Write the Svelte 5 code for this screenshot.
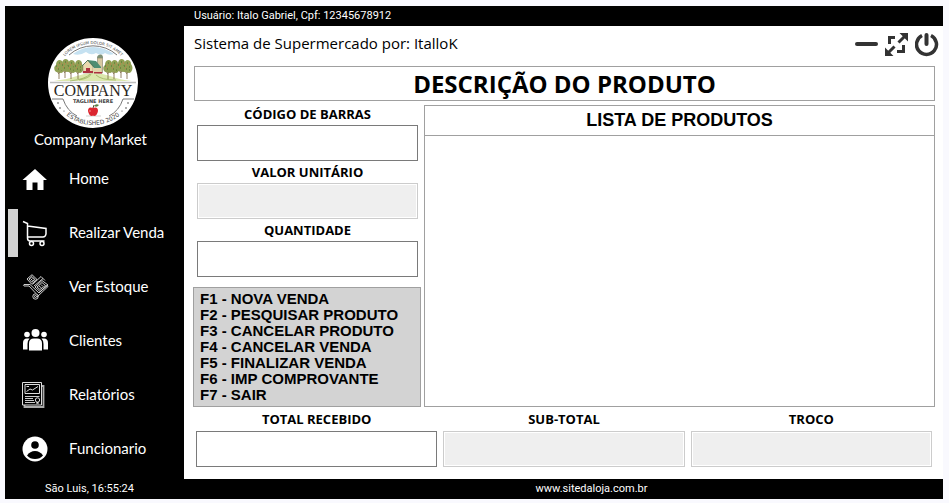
<script>
  const menu = [
    { id: 'home', label: 'Home' },
    { id: 'cart', label: 'Realizar Venda' },
    { id: 'stock', label: 'Ver Estoque' },
    { id: 'people', label: 'Clientes' },
    { id: 'report', label: 'Relatórios' },
    { id: 'user', label: 'Funcionario' }
  ];
  let active = $state('cart');

  const fields = [
    { id: 'codigo', label: 'CÓDIGO DE BARRAS', locked: false },
    { id: 'valor', label: 'VALOR UNITÁRIO', locked: true },
    { id: 'quantidade', label: 'QUANTIDADE', locked: false }
  ];
  const totals = [
    { id: 'recebido', label: 'TOTAL RECEBIDO', locked: false },
    { id: 'subtotal', label: 'SUB-TOTAL', locked: true },
    { id: 'troco', label: 'TROCO', locked: true }
  ];
  const shortcuts = [
    'F1 - NOVA VENDA',
    'F2 - PESQUISAR PRODUTO',
    'F3 - CANCELAR PRODUTO',
    'F4 - CANCELAR VENDA',
    'F5 - FINALIZAR VENDA',
    'F6 - IMP COMPROVANTE',
    'F7 - SAIR'
  ];
  const trees = [[11, 28], [17, 27], [23, 28], [30, 28], [60, 28], [66, 28], [73, 27], [79, 28]];
</script>

{#snippet field(f)}
  <div class="field">
    <label for={f.id}>{f.label}</label>
    <input id={f.id} type="text" disabled={f.locked} />
  </div>
{/snippet}

<div class="window">
  <aside>
    <svg class="logo" viewBox="0 0 90 90" aria-hidden="true">
      <defs>
        <path id="arcTop" d="M6 45A39 39 0 0 1 84 45" />
        <path id="arcBottom" d="M3 45A42 42 0 0 0 87 45" />
      </defs>
      <circle cx="45" cy="45" r="45" fill="#fff" />
      <text class="tiny" font-size="4" text-anchor="middle"><textPath href="#arcTop" startOffset="50%">LOREM IPSUM DOLOR SIT AMET</textPath></text>
      <path d="M21 17A36 36 0 0 1 69 17" fill="none" stroke="#555" stroke-width=".8" />
      <path d="M25 16Q34 9 45 9T66 16Q61 18 57 15Q53 18 48 15Q43 18 38 14Q32 18 25 16Z" fill="#c5e1f1" />
      <path d="M6 43Q18 42 29 38Q45 32 62 38Q72 42 84 43Z" fill="#dce8ad" />
      <path d="M22 43Q38 41 42 36M48 37Q53 42 68 42M31 42Q42 40 43 36" fill="none" stroke="#92aa55" stroke-width=".7" />
      {#each trees as [x, y]}
        <path d="M{x} {y}v13M{x} {y + 8}l-2-3M{x} {y + 7}l2-3" stroke="#76633d" stroke-width=".8" fill="none" />
        <path d="M{x - 4} {y + 5}q-2-4 1-6q0-4 3-5q4 0 4 4q3 4 0 8q-2 2-4 0q-2 1-4-1Z" fill="#8fa053" />
        <path d="M{x - 3} {y}h1m2-3h1m1 4h1m-4 2h1m2 1h1" stroke="#4d6a32" stroke-width="1" />
        <path d="M{x - 1} {y - 1}h1m2-1h1m-5 4h1" stroke="#cc7650" stroke-width="1" />
      {/each}
      <path d="M49.500 20h5v15h-5Z" fill="#d6c8a0" stroke="#6e6650" stroke-width=".5" />
      <path d="M49 20q0-3 3-3.500t3 3.500Z" fill="#7f9076" />
      <path d="M35 35v-8l5-5 5 5v8Z" fill="#ead9af" stroke="#6e6650" stroke-width=".4" />
      <path d="M39 22l9 1 5 6v1h-7Z" fill="#4f8d72" />
      <path d="M34 28l6-6 6 7" fill="none" stroke="#55795c" />
      <path d="M45 30h8v5h-8Z" fill="#e2d4aa" />
      <path d="M38 30h4v5h-4ZM35 33h10v2h-10ZM46 34h8v1.500h-8Z" fill="#ae3440" />
      <path d="M2 44.500H88" stroke="#bdbdbd" stroke-width="1.500" />
      <text x="45" y="58" class="serif" font-size="16" text-anchor="middle">COMPANY</text>
      <path d="M4 61H15M75 61H86M15 61Q19 73 29 78M75 61Q71 73 61 78" fill="none" stroke="#555" stroke-width=".8" />
      <text x="45" y="65" class="tag" font-size="5" text-anchor="middle">TAGLINE HERE</text>
      <g fill="#444"><circle cx="10" cy="65" r=".8" /><circle cx="12" cy="70" r=".8" /><circle cx="16" cy="73" r=".6" /><circle cx="80" cy="65" r=".8" /><circle cx="78" cy="70" r=".8" /><circle cx="74" cy="73" r=".6" /></g>
      <path d="M38 78H53" stroke="#bbb" stroke-width=".7" />
      <path d="M45 70q-5-2-5 3q1 5 4 5q1-1 2 0q3 0 4-5q0-5-5-3Z" fill="#db2630" />
      <path d="M45 70l1-3" stroke="#55402a" /><path d="M46 68q2-3 5-1q-2 3-5 1Z" fill="#568146" />
      <path d="M42 72v2" stroke="#ff8d88" />
      <text class="tiny" font-size="6" text-anchor="middle"><textPath href="#arcBottom" startOffset="50%">ESTABLISHED 2020</textPath></text>
    </svg>
    <div class="company">Company Market</div>

    <nav>
      {#each menu as m}
        <button class="item" class:active={active === m.id} onclick={() => (active = m.id)}>
          <svg class="icon" viewBox="0 0 26 26" aria-hidden="true">
            {#if m.id === 'home'}
              <path d="M12 3L24 14H20.500V24H14.500V16.500H9.500V24H3.500V14H-.5Z" fill="#fff" />
            {:else if m.id === 'cart'}
              <path d="M0 1.500L4.500 3.500V18Q4.500 21 7 21H21.500M4.500 6L23 8.500V14Q22.500 17 20 17H5" fill="none" stroke="#fff" stroke-width="1.500" />
              <g fill="#000" stroke="#fff" stroke-width="1.500"><circle cx="8.500" cy="23.500" r="2" /><circle cx="19" cy="23.500" r="2" /></g>
            {:else if m.id === 'stock'}
              <g fill="none" stroke="#e4e4e4" stroke-width=".9">
                <path d="M1 10.500H7L16 19L24 11.500L25 12.500L14 23M1 12H6L13 19.500M1 10.500Q0 11.200 1 12" />
                <circle cx="12.500" cy="22.500" r="2.700" /><circle cx="12.500" cy="22.500" r="1" />
                <path d="M4 5L9 .7L14 5.500L8.500 10ZM6 5L9 2.500L12 5.500L8.500 8ZM7.500 4.500l2 2M9 3.500l2 2" />
                <path d="M9.500 10.500L18 2.500L22 6.500M11 12L20 4.500" />
                <path d="M12 13L19 6.500L25 11L17 17.500ZM14 13L19 8.500L22.500 11.500L17 15.500ZM16 12l2.500 2M18 10.500l2 2" />
              </g>
            {:else if m.id === 'people'}
              <g fill="#fff">
                <circle cx="12.500" cy="5" r="4" /><circle cx="4" cy="6.500" r="2.800" /><circle cx="21" cy="6.500" r="2.800" />
                <path d="M6 22.500V15.500Q6 10.500 11 10.500H14Q19 10.500 19 15.500V22.500Z" />
                <path d="M0 21.500V15Q0 10.500 4 10.500H6.500Q4.500 12.500 4.500 16V21.500ZM25 21.500V15Q25 10.500 21 10.500H18.500Q20.500 12.500 20.500 16V21.500Z" />
              </g>
            {:else if m.id === 'report'}
              <path d="M1.500 23V25H20.500V4H18.500" fill="none" stroke="#aaa" stroke-width="1.800" />
              <path d="M-.5 .5H18.500V23H-.5Z" fill="#000" stroke="#ddd" />
              <path d="M2 11.500H16.500V2.500H2ZM3.500 9.500L7 7L9.500 8L15 4.500M3.500 4.500H6" fill="none" stroke="#ddd" />
              <path d="M2 14.500H16.500M2 16.500H10M2 18.500H11M2 20.500H12" stroke="#ccc" />
              <circle cx="14.500" cy="18" r="2.200" fill="#000" stroke="#ddd" /><path d="M13.500 20v2.500l1-1 1 1V20" fill="#ddd" />
            {:else}
              <circle cx="12" cy="13" r="12.500" fill="#fff" />
              <circle cx="12" cy="9" r="3.800" fill="#000" />
              <path d="M4 19.500Q7 15 12 15T20 19.500Q17 23 12 23T4 19.500Z" fill="#000" />
            {/if}
          </svg>
          <span>{m.label}</span>
        </button>
      {/each}
    </nav>
    <div class="clock">São Luis, 16:55:24</div>
  </aside>

  <div class="content">
    <div class="userbar">Usuário: Italo Gabriel, Cpf: 12345678912</div>
    <main>
      <header>
        <span class="title">Sistema de Supermercado por: ItalloK</span>
        <div class="controls">
          <button aria-label="Minimizar"><svg viewBox="0 0 24 24"><path d="M2 11H21" stroke="#333" stroke-width="4" stroke-linecap="round" /></svg></button>
          <button aria-label="Maximizar">
            <svg viewBox="0 0 24 24" fill="none" stroke="#333" stroke-width="3">
              <path d="M4.500 11V4.500H10M12 18.500H18.500V12M13.500 9.500L20 3M9.500 13.500L3 20" />
              <path d="M14.500 0H23V8.500ZM0 14.500V23H8.500Z" fill="#333" stroke="none" />
            </svg>
          </button>
          <button aria-label="Sair">
            <svg viewBox="0 0 24 24" fill="none" stroke="#333" stroke-width="3.500"><path d="M7 2.500A10 10 0 1 0 16 2.500" /><path d="M11.500 2V11" stroke-width="4" stroke-linecap="round" /></svg>
          </button>
        </div>
      </header>
      <h1>DESCRIÇÃO DO PRODUTO</h1>
      <div class="sale">
        <div class="left">
          <div class="fields">
            {#each fields as f}{@render field(f)}{/each}
          </div>
          <ul>
            {#each shortcuts as s}<li>{s}</li>{/each}
          </ul>
        </div>
        <section><h2>LISTA DE PRODUTOS</h2></section>
      </div>
      <div class="totals">
        {#each totals as f}{@render field(f)}{/each}
      </div>
    </main>
    <footer>www.sitedaloja.com.br</footer>
  </div>
</div>

<style>
  :global(body) { margin: 0; background: #f9f9fe; }
  .window {
    display: flex;
    margin: 6px 6px 4px 5px;
    background: #000;
    color: #fff;
    font-family: "Liberation Sans", Arial, sans-serif;
  }
  aside {
    width: 179px;
    flex: none;
    display: flex;
    flex-direction: column;
    padding-top: 32px;
    font-family: Lato, "Century Gothic", sans-serif;
    box-sizing: border-box;
  }
  .logo { width: 90px; height: 90px; margin-left: 43px; }
  .tiny { font-family: "DejaVu Sans", sans-serif; fill: #444; }
  .tag { font-family: "DejaVu Sans", sans-serif; font-weight: bold; fill: #444; }
  .serif { font-family: "Liberation Serif", serif; fill: #292522; }
  .company { padding: 0 8px 2px 0; font-size: 15px; line-height: 22px; text-align: center; }
  nav { display: flex; flex-direction: column; }
  .item {
    display: flex;
    align-items: center;
    gap: 20px;
    height: 48px;
    margin: 3px 0 3px 3px;
    padding: 0 0 0 5px;
    border: 0;
    border-left: 10px solid transparent;
    background: none;
    color: #fff;
    font: 15px/20px Lato, "Century Gothic", sans-serif;
    text-align: left;
  }
  .item span { padding-bottom: 2px; }
  .item.active { border-left-color: #d3d3d3; }
  .icon { width: 26px; height: 26px; flex: none; overflow: visible; }
  .clock, .userbar, footer { font: 11px/20px Roboto, Arial, sans-serif; }
  .clock {
    margin-top: auto;
    padding-right: 10px;
    text-align: center;
  }
  .content { flex: 1; min-width: 0; }
  .userbar { padding-left: 10px; }
  main { padding: 0 8px 12px 9px; background: #fff; color: #000; }
  header {
    display: flex;
    align-items: flex-start;
    justify-content: space-between;
    height: 40px;
    padding-left: 1px;
  }
  .title { font: 15px/34px "Open Sans", "Segoe UI", sans-serif; }
  .controls { display: flex; gap: 6px; padding-top: 7px; margin-right: -4px; }
  .controls button { padding: 0; border: 0; background: none; width: 24px; height: 24px; }
  .controls svg { display: block; width: 24px; height: 24px; }
  h1 {
    margin: 0 0 4px 1px;
    border: 1px solid #a0a0a0;
    font: bold 24px/33px "Open Sans", "Segoe UI", sans-serif;
    text-align: center;
  }
  .sale { display: flex; gap: 3px; }
  .left { width: 228px; flex: none; }
  .fields { display: flex; flex-direction: column; gap: 2px; padding: 0 3px 10px 4px; }
  .field { display: flex; flex-direction: column; gap: 2px; min-width: 0; }
  label { font: bold 13px/18px "Open Sans", "Segoe UI", sans-serif; text-align: center; }
  input {
    width: 100%;
    height: 36px;
    box-sizing: border-box;
    padding: 0 6px;
    border: 1px solid #7a7a7a;
    background: #fff;
    font: 16px "Open Sans", "Segoe UI", sans-serif;
  }
  input:disabled { border-color: #ccc; background: #efefef; box-shadow: inset 0 0 0 1px #fff; }
  ul {
    margin: 0;
    padding: 3px 6px;
    border: 1px solid #a0a0a0;
    background: #d3d3d3;
    list-style: none;
    font-size: 15px;
    font-weight: bold;
    line-height: 16px;
  }
  section { flex: 1; border: 1px solid #a0a0a0; }
  h2 {
    margin: 0;
    border-bottom: 1px solid #a0a0a0;
    font-size: 18px;
    font-weight: bold;
    line-height: 29px;
    text-align: center;
  }
  .totals { display: grid; grid-template-columns: repeat(3, 1fr); gap: 6px; padding: 4px 3px 0; }
  .totals .field { gap: 4px; }
  .totals label { line-height: 16px; }
  footer { font-size: 11px; text-align: center; padding-left: 56px; }
</style>
